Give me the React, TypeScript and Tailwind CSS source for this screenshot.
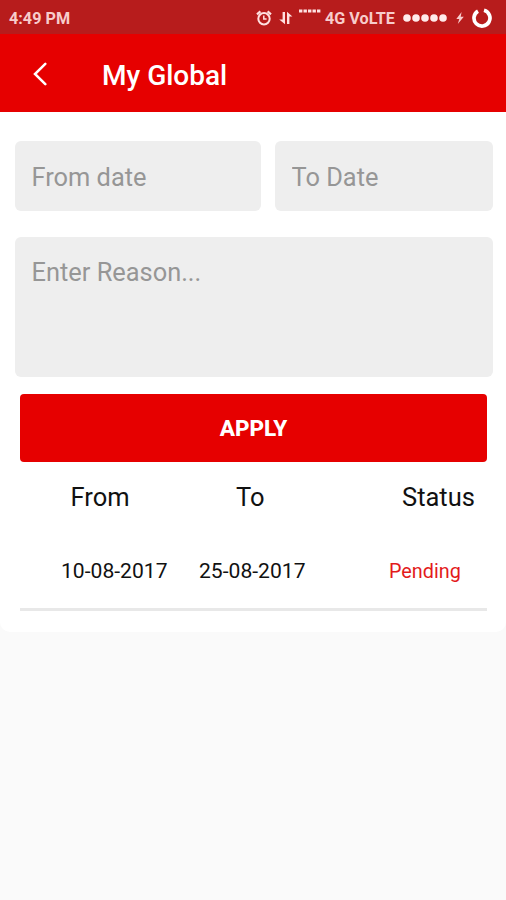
import { useState } from 'react';

type LeaveRequest = {
  from: string;
  to: string;
  status: string;
};

const requests: LeaveRequest[] = [
  { from: '10-08-2017', to: '25-08-2017', status: 'Pending' },
];

const StatusBar = () => {
  return (
    <div className="flex h-[34px] items-center bg-[#b71c1c] pt-[3px] text-[16.2px] font-bold leading-none text-[#f7cccc]">
      <span className="ml-[9px] w-[247px] whitespace-nowrap pt-px">4:49 PM</span>
      {/* alarm */}
      <svg width="16" height="16" viewBox="0 0 16 16" fill="none" stroke="#ffe0e0" strokeWidth="2" className="-mt-[2px]">
        <circle cx="8" cy="8.7" r="5.7" />
        <path d="M1 4.4 4.4 1.4M15 4.4 11.6 1.4" strokeWidth="2.2" />
        <path d="M7.8 5.6v3.3h2.8" strokeWidth="1.5" />
      </svg>
      {/* mobile data arrows */}
      <svg width="14" height="14" viewBox="0 0 14 14" fill="#ffe0e0" className="ml-[7px] -mt-[2px]">
        <path d="M3.6 1h2.4v12.2L.2 8.4h3.4zM8 13V.8l5.4 4.8h-3V13z" />
      </svg>
      <svg width="22" height="4" viewBox="0 0 22 4" fill="#ffe3e3" className="ml-[6px] mb-[16px]">
        <path d="M0 .5h3.4v3H0zM4.5.5h3.4v3H4.5zM9 .5h3.4v3H9zM13.5.5h3.4v3h-3.4zM18 .5h3.4v3H18z" />
      </svg>
      <span className="ml-[4px] w-[74px] whitespace-nowrap pt-px">4G VoLTE</span>
      <svg width="44" height="8" viewBox="0 0 44 8" fill="#ffeaea" className="ml-[4px] -mt-[2px]">
        <circle cx="4" cy="4" r="3.8" />
        <circle cx="13" cy="4" r="3.8" />
        <circle cx="22" cy="4" r="3.8" />
        <circle cx="31" cy="4" r="3.8" />
        <circle cx="40" cy="4" r="3.8" />
      </svg>
      {/* charging */}
      <svg width="8" height="12" viewBox="0 0 8 12" fill="currentColor" className="ml-[9px] -mt-[2px]">
        <path d="M5.6 0 .3 7h3L1.8 12 7.8 4.8H4.7z" />
      </svg>
      <svg width="20" height="20" viewBox="0 0 20 20" fill="none" stroke="#fff" strokeWidth="3.7" className="ml-[8px] -mt-[2px]">
        <path d="M12 2.3A8 8 0 1 1 6 3.1" />
      </svg>
    </div>
  );
};

const Header = () => {
  return (
    <header className="flex h-[78px] items-center bg-[#e60000] text-white">
      <button type="button" aria-label="Back" className="ml-[33px] mt-px">
        <svg width="14" height="24" viewBox="0 0 14 24" fill="none" stroke="currentColor" strokeWidth="2.5" strokeLinecap="round">
          <path d="M12.3 1.8 2 12l10.3 10.2" />
        </svg>
      </button>
      <h1 className="ml-[55px] mt-[5px] text-[28px] font-medium leading-none">My Global</h1>
    </header>
  );
};

const fieldStyle =
  'rounded-[6px] bg-[#eeeeee] pl-[17px] pr-[16px] text-[25.4px] text-[#555555] placeholder:text-[#969696] placeholder:opacity-100 outline-none';

const App = () => {
  const [reason, setReason] = useState('');

  return (
    <div className="min-h-screen bg-[#fafafa] font-['Roboto',sans-serif]">
      <StatusBar />
      <Header />
      <main className="h-[520px] rounded-b-[10px] bg-white pt-[29px]">
        <div className="flex gap-[14px] pl-[14.5px]">
          <input placeholder="From date" className={`${fieldStyle} h-[70px] w-[246px] pt-[2px]`} />
          <input placeholder="To Date" className={`${fieldStyle} h-[70px] w-[218px] pt-[2px]`} />
        </div>
        <div className="mt-[26px] pl-[14.5px]">
          <textarea
            placeholder="Enter Reason..."
            value={reason}
            onChange={(e) => setReason(e.target.value)}
            className={`${fieldStyle} block h-[140px] w-[478px] resize-none pt-[20px] leading-[31px]`}
          />
        </div>
        <div className="ml-[20px] mr-[19px] mt-[17px]">
          <button type="button" className="h-[67.5px] w-full rounded-[4px] bg-[#e60000] pt-[3px] text-[22.5px] font-extrabold text-white">
            APPLY
          </button>
          <div className="flex h-[72px] items-center text-[25.5px] leading-none text-[#111111]">
            <span className="ml-[50.5px] w-[165.5px]">From</span>
            <span className="w-[166px]">To</span>
            <span>Status</span>
          </div>
          {requests.map((item) => (
            <div key={item.from} className="flex h-[77px] items-center border-b-[3px] border-[#e8e8e8] text-[21.1px] leading-none text-[#111111]">
              <span className="ml-[41px] w-[138px]">{item.from}</span>
              <span className="w-[190px]">{item.to}</span>
              <span className="pt-[2px] text-[19.8px] text-[#e31b1b]">{item.status}</span>
            </div>
          ))}
        </div>
      </main>
    </div>
  );
};

export default App;
